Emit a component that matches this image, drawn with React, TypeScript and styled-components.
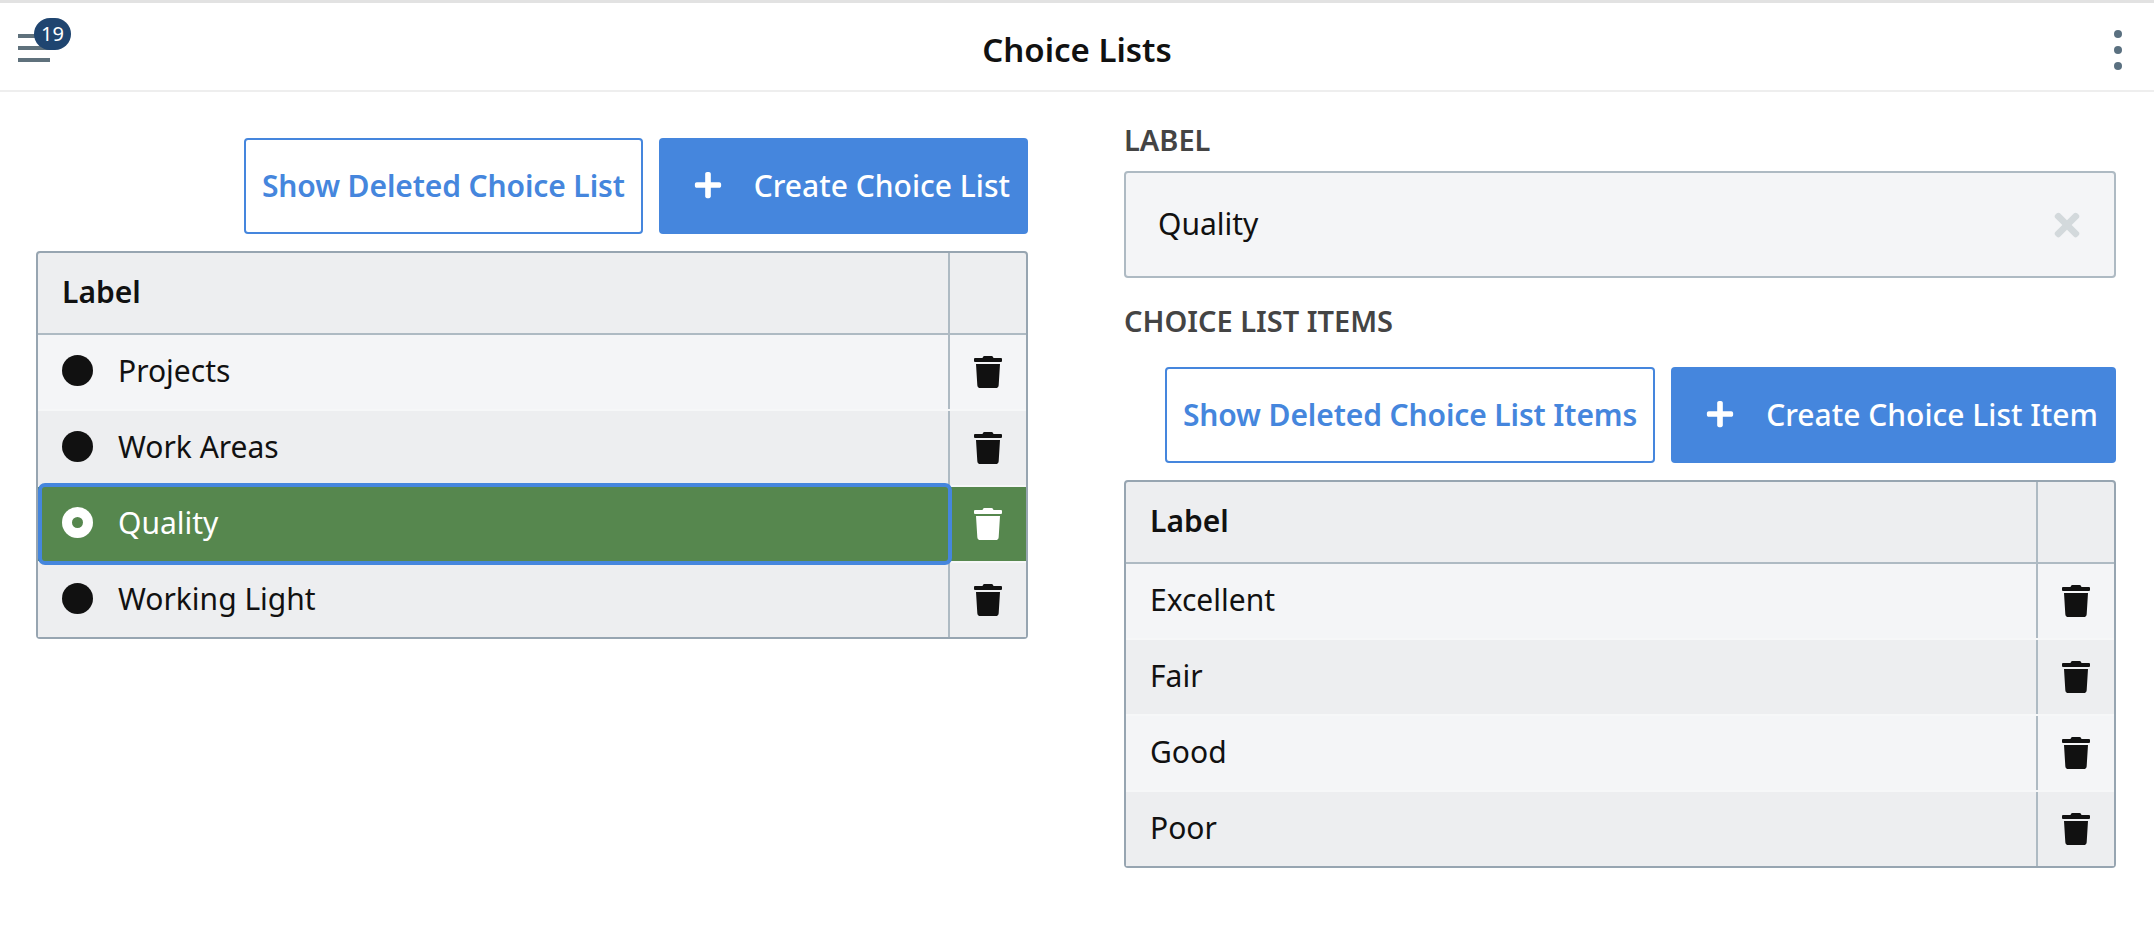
import React from "react"
import styled, { createGlobalStyle } from "styled-components"
import { FaTrash, FaPlus, FaTimes } from "react-icons/fa"

const GlobalStyle = createGlobalStyle`
  html, body {
    margin: 0;
    padding: 0;
    background: #fff;
  }
  body {
    font-family: "Noto Sans", "Open Sans", sans-serif;
    color: #111;
  }
`

const Page = styled.div`
  width: 2154px;
  height: 948px;
  overflow: hidden;
  border-top: 3px solid #e2e2e2;
  box-sizing: border-box;
`

const Header = styled.header`
  height: 89px;
  box-sizing: border-box;
  display: grid;
  grid-template-columns: 1fr auto 1fr;
  align-items: center;
  padding: 3px 32px 0;
  border-bottom: 2px solid #eeeeee;
`

const MenuButton = styled.div`
  position: relative;
  width: 32px;
  height: 28px;
  margin-left: -14px;
  display: flex;
  flex-direction: column;
  justify-content: space-between;
`

const MenuBar = styled.span`
  height: 4px;
  background: #5f717c;
`

const Badge = styled.span`
  position: absolute;
  left: 16px;
  top: -16px;
  width: 37px;
  height: 32px;
  border-radius: 16px;
  background: #1f4570;
  color: #fff;
  font-size: 20px;
  line-height: 32px;
  text-align: center;
`

const Title = styled.h1`
  margin: 2px 0 0;
  font-size: 33px;
  font-weight: 600;
  color: #111;
`

const KebabButton = styled.div`
  justify-self: end;
  margin-top: 4px;
  display: flex;
  flex-direction: column;
  gap: 8px;
`

const KebabDot = styled.span`
  width: 8px;
  height: 8px;
  border-radius: 50%;
  background: #5a7080;
`

const Content = styled.main`
  display: grid;
  grid-template-columns: 992px 992px;
  column-gap: 96px;
  padding: 32px 38px 0 36px;
  align-items: start;
`

const Column = styled.section<{ $offset?: boolean }>`
  display: flex;
  flex-direction: column;
  padding-top: ${(p) => (p.$offset ? "14px" : "0")};
`

const Toolbar = styled.div`
  display: flex;
  justify-content: flex-end;
  gap: 16px;
  margin-bottom: 17px;
`

const OutlineButton = styled.button`
  height: 96px;
  padding: 0 16px 2px;
  box-sizing: border-box;
  border: 2px solid #4586dd;
  border-radius: 4px;
  background: #fff;
  color: #4586dd;
  font-family: inherit;
  font-size: 30px;
  font-weight: 600;
  letter-spacing: -0.12px;
`

const PrimaryButton = styled.button`
  height: 96px;
  padding: 0 18px 2px 34px;
  box-sizing: border-box;
  display: flex;
  align-items: center;
  gap: 31px;
  border: none;
  border-radius: 4px;
  background: #4586dd;
  color: #fff;
  font-family: inherit;
  font-size: 30px;
  font-weight: 500;
`

const Table = styled.div`
  border: 2px solid #97a5b1;
  border-radius: 4px;
  background: #edeef0;
`

const HeaderRow = styled.div`
  display: flex;
  height: 80px;
  border-bottom: 2px solid #aebac3;
`

const Row = styled.div<{ $alt?: boolean; $selected?: boolean }>`
  display: flex;
  height: 74px;
  background: ${(p) => (p.$selected ? "#56874e" : p.$alt ? "#edeef0" : "#f4f5f7")};
  color: ${(p) => (p.$selected ? "#fff" : "#111")};
  border-bottom: 2px solid #f6f7f8;
  &:last-child {
    border-bottom: none;
  }
`

const LabelCell = styled.div<{ $selected?: boolean; $head?: boolean }>`
  flex: 1;
  min-width: 0;
  display: flex;
  align-items: center;
  gap: 25px;
  margin-left: ${(p) => (p.$selected ? "4px" : "0")};
  padding: 0 0 4px ${(p) => (p.$selected ? "20px" : "24px")};
  font-size: 30px;
  font-weight: ${(p) => (p.$head ? 600 : 400)};
  border-radius: 3px;
  outline: ${(p) => (p.$selected ? "4px solid #4586dd" : "none")};
  position: ${(p) => (p.$selected ? "relative" : "static")};
`

const ActionCell = styled.div`
  width: 76px;
  flex: none;
  display: flex;
  align-items: center;
  justify-content: center;
  border-left: 2px solid #aebac3;
  font-size: 32px;
`

const RadioDot = styled.span<{ $selected?: boolean }>`
  width: 31px;
  height: 31px;
  flex: none;
  border-radius: 50%;
  background: ${(p) => (p.$selected ? "#fff" : "#111")};
  display: flex;
  align-items: center;
  justify-content: center;
  &::after {
    content: "";
    display: ${(p) => (p.$selected ? "block" : "none")};
    width: 11px;
    height: 11px;
    border-radius: 50%;
    background: #56874e;
  }
`

const FieldLabel = styled.h2`
  margin: 0;
  height: 32px;
  line-height: 32px;
  font-size: 29px;
  font-weight: 600;
  color: #444;
  text-transform: uppercase;
`

const LabelInput = styled.div`
  height: 107px;
  margin: 15px 0 27px;
  box-sizing: border-box;
  display: flex;
  align-items: center;
  justify-content: space-between;
  padding: 0 29px 0 32px;
  border: 2px solid #aebac3;
  border-radius: 4px;
  background: #f4f5f7;
  font-size: 30px;
  color: #d3d9dc;
`

const InputText = styled.span`
  color: #111;
  padding-bottom: 2px;
`

const ItemsToolbar = styled(Toolbar)`
  margin-top: 30px;
`

const Trash = styled(FaTrash)`
  display: block;
`

const lists = ["Projects", "Work Areas", "Quality", "Working Light"]
const items = ["Excellent", "Fair", "Good", "Poor"]

export default function App() {
  return (
    <Page>
      <GlobalStyle />
      <Header>
        <MenuButton>
          <MenuBar />
          <MenuBar />
          <MenuBar />
          <Badge>19</Badge>
        </MenuButton>
        <Title>Choice Lists</Title>
        <KebabButton>
          <KebabDot />
          <KebabDot />
          <KebabDot />
        </KebabButton>
      </Header>
      <Content>
        <Column $offset>
          <Toolbar>
            <OutlineButton>Show Deleted Choice List</OutlineButton>
            <PrimaryButton>
              <FaPlus size={30} />
              Create Choice List
            </PrimaryButton>
          </Toolbar>
          <Table>
            <HeaderRow>
              <LabelCell $head>Label</LabelCell>
              <ActionCell />
            </HeaderRow>
            {lists.map((name, i) => (
              <Row key={name} $alt={i % 2 === 1} $selected={name === "Quality"}>
                <LabelCell $selected={name === "Quality"}>
                  <RadioDot $selected={name === "Quality"} />
                  {name}
                </LabelCell>
                <ActionCell>
                  <Trash />
                </ActionCell>
              </Row>
            ))}
          </Table>
        </Column>
        <Column>
          <FieldLabel>Label</FieldLabel>
          <LabelInput>
            <InputText>Quality</InputText>
            <FaTimes size={36} />
          </LabelInput>
          <FieldLabel>Choice List Items</FieldLabel>
          <ItemsToolbar>
            <OutlineButton>Show Deleted Choice List Items</OutlineButton>
            <PrimaryButton>
              <FaPlus size={30} />
              Create Choice List Item
            </PrimaryButton>
          </ItemsToolbar>
          <Table>
            <HeaderRow>
              <LabelCell $head>Label</LabelCell>
              <ActionCell />
            </HeaderRow>
            {items.map((name, i) => (
              <Row key={name} $alt={i % 2 === 1}>
                <LabelCell>{name}</LabelCell>
                <ActionCell>
                  <Trash />
                </ActionCell>
              </Row>
            ))}
          </Table>
        </Column>
      </Content>
    </Page>
  )
}
